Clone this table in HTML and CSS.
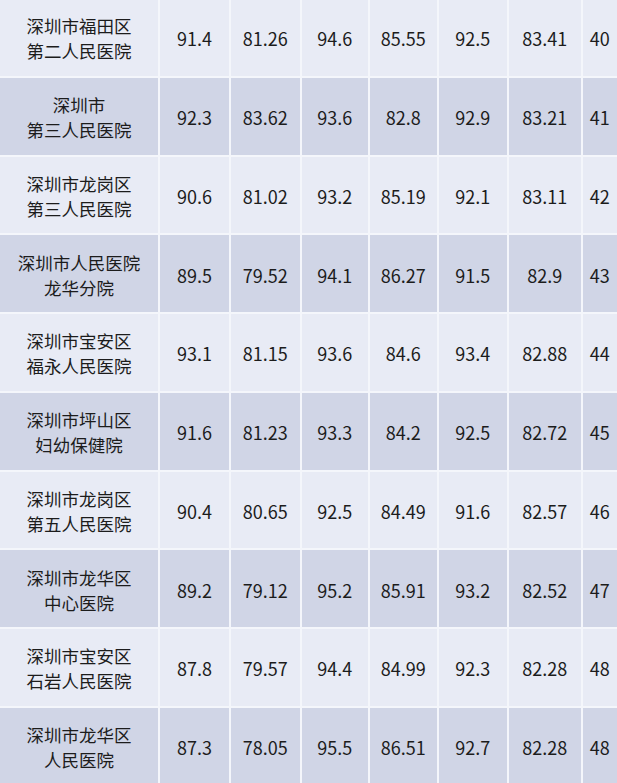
FILE: index.html
```html
<!DOCTYPE html>
<html lang="zh-CN">
<head>
<meta charset="utf-8">
<title>医院评分表</title>
<link rel="stylesheet" href="styles.css">
</head>
<body>
<div class="table">
  <div class="row light"><div class="cell name">深圳市福田区<br>第二人民医院</div><div class="cell">91.4</div><div class="cell">81.26</div><div class="cell">94.6</div><div class="cell">85.55</div><div class="cell">92.5</div><div class="cell">83.41</div><div class="cell">40</div></div>
  <div class="row dark"><div class="cell name">深圳市<br>第三人民医院</div><div class="cell">92.3</div><div class="cell">83.62</div><div class="cell">93.6</div><div class="cell">82.8</div><div class="cell">92.9</div><div class="cell">83.21</div><div class="cell">41</div></div>
  <div class="row light"><div class="cell name">深圳市龙岗区<br>第三人民医院</div><div class="cell">90.6</div><div class="cell">81.02</div><div class="cell">93.2</div><div class="cell">85.19</div><div class="cell">92.1</div><div class="cell">83.11</div><div class="cell">42</div></div>
  <div class="row dark"><div class="cell name">深圳市人民医院<br>龙华分院</div><div class="cell">89.5</div><div class="cell">79.52</div><div class="cell">94.1</div><div class="cell">86.27</div><div class="cell">91.5</div><div class="cell">82.9</div><div class="cell">43</div></div>
  <div class="row light"><div class="cell name">深圳市宝安区<br>福永人民医院</div><div class="cell">93.1</div><div class="cell">81.15</div><div class="cell">93.6</div><div class="cell">84.6</div><div class="cell">93.4</div><div class="cell">82.88</div><div class="cell">44</div></div>
  <div class="row dark"><div class="cell name">深圳市坪山区<br>妇幼保健院</div><div class="cell">91.6</div><div class="cell">81.23</div><div class="cell">93.3</div><div class="cell">84.2</div><div class="cell">92.5</div><div class="cell">82.72</div><div class="cell">45</div></div>
  <div class="row light"><div class="cell name">深圳市龙岗区<br>第五人民医院</div><div class="cell">90.4</div><div class="cell">80.65</div><div class="cell">92.5</div><div class="cell">84.49</div><div class="cell">91.6</div><div class="cell">82.57</div><div class="cell">46</div></div>
  <div class="row dark"><div class="cell name">深圳市龙华区<br>中心医院</div><div class="cell">89.2</div><div class="cell">79.12</div><div class="cell">95.2</div><div class="cell">85.91</div><div class="cell">93.2</div><div class="cell">82.52</div><div class="cell">47</div></div>
  <div class="row light"><div class="cell name">深圳市宝安区<br>石岩人民医院</div><div class="cell">87.8</div><div class="cell">79.57</div><div class="cell">94.4</div><div class="cell">84.99</div><div class="cell">92.3</div><div class="cell">82.28</div><div class="cell">48</div></div>
  <div class="row dark"><div class="cell name">深圳市龙华区<br>人民医院</div><div class="cell">87.3</div><div class="cell">78.05</div><div class="cell">95.5</div><div class="cell">86.51</div><div class="cell">92.7</div><div class="cell">82.28</div><div class="cell">48</div></div>
</div>
</body>
</html>
```
FILE: styles.css
```css
html, body {
  margin: 0;
  padding: 0;
  background: #f4f6fb;
  overflow: hidden;
}
body {
  width: 617px;
  height: 783px;
  font-family: "Noto Sans CJK SC", "Noto Sans", sans-serif;
  color: #1c1c1c;
}
.table {
  display: grid;
  grid-auto-rows: 76.75px;
  row-gap: 2px;
  margin-top: -1px;
}
.row {
  display: grid;
  grid-template-columns: 158px 69px 68.5px 66.5px 66.5px 68.5px 71.5px 1fr;
  column-gap: 2px;
}
.cell {
  display: flex;
  align-items: center;
  justify-content: center;
  text-align: center;
  font-size: 18px;
  white-space: nowrap;
  padding-top: 2px;
}
.cell.name {
  font-size: 17.5px;
  line-height: 25px;
}
.light .cell { background: #e8ebf5; }
.dark .cell { background: #d0d5e6; }
```
